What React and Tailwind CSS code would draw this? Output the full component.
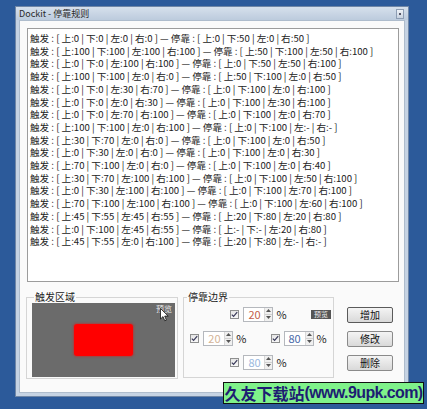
import React from "react";

const rules = [
  ["上:0 | 下:0 | 左:0 | 右:0", "上:0 | 下:50 | 左:0 | 右:50"],
  ["上:100 | 下:100 | 左:100 | 右:100", "上:50 | 下:100 | 左:50 | 右:100"],
  ["上:0 | 下:0 | 左:100 | 右:100", "上:0 | 下:50 | 左:50 | 右:100"],
  ["上:100 | 下:100 | 左:0 | 右:0", "上:50 | 下:100 | 左:0 | 右:50"],
  ["上:0 | 下:0 | 左:30 | 右:70", "上:0 | 下:100 | 左:0 | 右:100"],
  ["上:0 | 下:0 | 左:0 | 右:30", "上:0 | 下:100 | 左:30 | 右:100"],
  ["上:0 | 下:0 | 左:70 | 右:100", "上:0 | 下:100 | 左:0 | 右:70"],
  ["上:100 | 下:100 | 左:0 | 右:100", "上:0 | 下:100 | 左:- | 右:-"],
  ["上:30 | 下:70 | 左:0 | 右:0", "上:0 | 下:100 | 左:0 | 右:50"],
  ["上:0 | 下:30 | 左:0 | 右:0", "上:0 | 下:100 | 左:0 | 右:30"],
  ["上:70 | 下:100 | 左:0 | 右:0", "上:0 | 下:100 | 左:0 | 右:40"],
  ["上:30 | 下:70 | 左:100 | 右:100", "上:0 | 下:100 | 左:50 | 右:100"],
  ["上:0 | 下:30 | 左:100 | 右:100", "上:0 | 下:100 | 左:70 | 右:100"],
  ["上:70 | 下:100 | 左:100 | 右:100", "上:0 | 下:100 | 左:60 | 右:100"],
  ["上:45 | 下:55 | 左:45 | 右:55", "上:20 | 下:80 | 左:20 | 右:80"],
  ["上:0 | 下:100 | 左:45 | 右:55", "上:- | 下:- | 左:20 | 右:80"],
  ["上:45 | 下:55 | 左:0 | 右:100", "上:20 | 下:80 | 左:- | 右:-"],
];

function Check() {
  return (
    <div className="w-[9px] h-[9px] border border-[#8e8f8f] bg-gradient-to-b from-[#e6e6e6] to-[#f8f8f8] flex items-center justify-center">
      <svg width="7" height="7" viewBox="0 0 7 7">
        <path d="M0.8 3.6 L2.6 5.4 L6.2 1.2" fill="none" stroke="#3a3a5a" strokeWidth="1.2" />
      </svg>
    </div>
  );
}

function Spin({ value, color }) {
  return (
    <div className="flex items-center">
      <Check />
      <div className="ml-[4px] w-[30px] h-[15px] border border-[#b5b8bd] bg-white flex">
        <div className={`flex-1 pl-[4px] text-[11px] leading-[13px] ${color}`}>{value}</div>
        <div className="w-[8px] flex flex-col border-l border-[#d8d8d8]">
          <div className="flex-1 flex items-center justify-center bg-[#f0f0f0] border-b border-[#d0d0d0]">
            <svg width="5" height="3" viewBox="0 0 5 3"><path d="M0 3 L2.5 0 L5 3 Z" fill="#555" /></svg>
          </div>
          <div className="flex-1 flex items-center justify-center bg-[#f0f0f0]">
            <svg width="5" height="3" viewBox="0 0 5 3"><path d="M0 0 L2.5 3 L5 0 Z" fill="#555" /></svg>
          </div>
        </div>
      </div>
      <div className="ml-[3px] text-[11px] leading-[13px] text-[#222]">%</div>
    </div>
  );
}

function Btn({ children, focus }) {
  return (
    <div
      className={`w-[46px] h-[16px] rounded-[2px] border ${focus ? "border-[#5a5a5a]" : "border-[#8a8a8a]"} bg-gradient-to-b from-[#f4f4f4] to-[#d9d9d9] flex items-center justify-center text-[10px] leading-[12px] text-[#111]`}
    >
      {children}
    </div>
  );
}

export default function App() {
  return (
    <div
      className="relative w-[427px] h-[409px] bg-[#2c5a9a] pt-[6px] pl-[15px] overflow-hidden"
      style={{ fontFamily: '"Noto Sans CJK SC", "Noto Sans", sans-serif' }}
    >
      <div className="w-[394px] h-[391px] bg-[#c6d3e3] border border-[#6f86a6] flex flex-col px-[3px] pb-[3px]">
        <div className="h-[13px] flex items-center justify-between -mx-[3px] px-[3px] bg-gradient-to-b from-[#d6e0ec] to-[#bccbdd]">
          <div className="text-[9px] leading-[11px] text-[#2a2a2a]">Dockit - 停靠规则</div>
          <div className="w-[8px] h-[10px] mr-[1px] border border-[#8d9db3] bg-gradient-to-b from-[#eef2f7] to-[#c8d3e1] flex items-center justify-center">
            <div className="w-[2px] h-[2px] bg-[#556]" />
          </div>
        </div>
        <div className="flex-1 bg-[#fafafa] border border-[#aebccc] flex flex-col">
          <div className="ml-[7px] mt-[7px] w-[372px] h-[254px] border border-[#9c9c9c] bg-white pl-[2px] pt-[3px] text-[9.6px] leading-[12.7px] text-[#222] whitespace-nowrap overflow-hidden">
            {rules.map(([a, b], i) => (
              <div key={i}>
                触发 : [ {a} ] — 停靠 : [ {b} ]
              </div>
            ))}
          </div>
          <div className="flex ml-[6px] mt-[9px]">
            <fieldset className="w-[152px] h-[88px] border border-[#d5d5d5] pl-[5px] pr-[1px] pb-[1px]">
              <legend className="ml-[2px] px-[1px] text-[10px] leading-[12px] text-[#222]">触发区域</legend>
              <div className="relative w-[143px] h-[74px] bg-[#6b6b6b] flex items-center justify-center">
                <div className="w-[59px] h-[32px] rounded-[3px] bg-[#ff0000] shadow-[0_0_2px_1px_rgba(200,40,40,0.6)]" />
                <div className="absolute top-[1px] right-[3px] text-[8px] leading-[9px] text-[#e8e8e8]">预览</div>
                <svg className="absolute top-[5px] right-[6px]" width="9" height="14" viewBox="0 0 9 14">
                  <path d="M0.5 0.5 L0.5 11 L3 8.6 L4.8 12.8 L6.4 12.1 L4.7 8.1 L8.2 8.1 Z" fill="#fff" stroke="#111" strokeWidth="0.8" />
                </svg>
              </div>
            </fieldset>
            <fieldset className="relative ml-[5px] w-[151px] h-[87px] border border-[#d5d5d5]">
              <legend className="ml-[3px] px-[1px] text-[10px] leading-[12px] text-[#222]">停靠边界</legend>
              <div className="absolute top-[7px] right-[2px] w-[20px] h-[9px] bg-[#555] text-[7px] leading-[9px] text-[#eee] text-center">预览</div>
              <div className="flex flex-col -mt-px">
                <div className="h-[24px] flex items-center justify-center">
                  <Spin value="20" color="text-[#c4604a]" />
                </div>
                <div className="h-[24px] flex items-center justify-center gap-[24px]">
                  <Spin value="20" color="text-[#d4b496]" />
                  <Spin value="80" color="text-[#4868a8]" />
                </div>
                <div className="h-[24px] flex items-center justify-center">
                  <Spin value="80" color="text-[#9ab8de]" />
                </div>
              </div>
            </fieldset>
            <div className="ml-[13px] mt-[16px] flex flex-col gap-[8px]">
              <Btn focus>增加</Btn>
              <Btn>修改</Btn>
              <Btn>删除</Btn>
            </div>
          </div>
        </div>
      </div>
      <div className="absolute left-[223px] top-[382px] w-[201px] h-[22px] bg-[#7ff28a] border border-[#111] flex items-center justify-center whitespace-nowrap">
        <span className="text-[16px] leading-[20px] font-bold text-[#1d1d72]" style={{ fontFamily: '"Noto Sans CJK SC", sans-serif' }}>久友下载站</span>
        <span className="text-[16px] leading-[20px] font-bold text-[#1d1d72] tracking-[-0.6px]" style={{ fontFamily: '"Liberation Sans", sans-serif' }}>(www.9upk.com)</span>
      </div>
    </div>
  );
}
